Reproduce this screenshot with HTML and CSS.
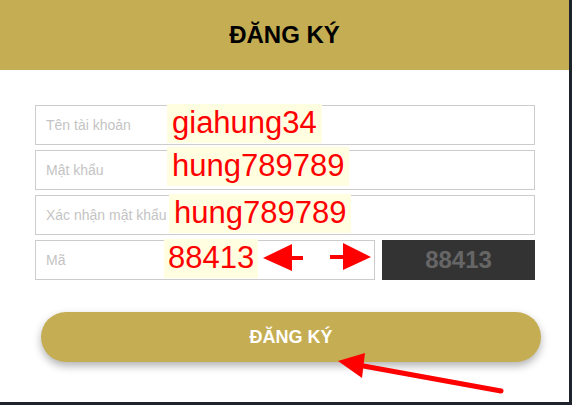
FILE: index.html
```html
<!DOCTYPE html>
<html lang="vi">
<head>
    <meta charset="UTF-8">
    <meta name="viewport" content="width=device-width, initial-scale=1.0">
    <title>Đăng ký</title>
    <link rel="stylesheet" href="styles.css">
</head>
<body>
    <div class="modal">
        <div class="modal-header">
            <h1>ĐĂNG KÝ</h1>
        </div>

        <div class="modal-body">
            <div class="field">
                <input type="text" placeholder="Tên tài khoản">
                <span class="mark mark-1">giahung34</span>
            </div>
            <div class="field">
                <input type="text" placeholder="Mật khẩu">
                <span class="mark mark-2">hung789789</span>
            </div>
            <div class="field">
                <input type="text" placeholder="Xác nhận mật khẩu">
                <span class="mark mark-3">hung789789</span>
            </div>
            <div class="captcha-row">
                <div class="field">
                    <input type="text" placeholder="Mã">
                    <span class="mark mark-4">88413</span>
                </div>
                <div class="captcha">88413</div>
            </div>

            <button class="submit">ĐĂNG KÝ</button>
        </div>

        <!-- annotation arrows -->
        <svg class="arrows" viewBox="0 0 569 402" width="569" height="402">
            <polygon points="263,258 292,244 292,271" fill="#f00"/>
            <rect x="290" y="256" width="13" height="4" fill="#f00"/>
            <rect x="330" y="255" width="15" height="4" fill="#f00"/>
            <polygon points="371,257 343,243 343,270" fill="#f00"/>
            <polygon points="338,361 365,353 362,378" fill="#f00"/>
            <line x1="358" y1="365" x2="501" y2="391" stroke="#f00" stroke-width="5" stroke-linecap="round"/>
        </svg>
    </div>
</body>
</html>
```

FILE: styles.css
```css
/* General Styling */
body {
    margin: 0;
    background: #1e222a;
    font-family: 'Liberation Sans', Arial, sans-serif;
}

.modal {
    position: relative;
    width: 569px;
    height: 402px;
    background: #fff;
}

.modal-header {
    height: 70px;
    background: #c5ad53;
    display: flex;
    align-items: center;
    justify-content: center;
}

.modal-header h1 {
    margin: 0;
    font-size: 24px;
    font-weight: bold;
    color: #000;
}

.modal-body {
    padding: 35px 34px 0 35px;
    display: flex;
    flex-direction: column;
    gap: 5px;
}

.field {
    position: relative;
}

.field input {
    display: block;
    box-sizing: border-box;
    width: 100%;
    height: 40px;
    padding: 0 10px;
    border: 1px solid #ccc;
    font-family: 'Liberation Sans', Arial, sans-serif;
    font-size: 14px;
    outline: none;
}

.field input::placeholder {
    color: #c4c4c4;
}

/* highlighted values typed over the form */
.mark {
    position: absolute;
    top: -1px;
    height: 39px;
    padding: 0 5px;
    background: #fffee0;
    color: #f00;
    font-size: 31px;
    line-height: 38px;
    white-space: nowrap;
}

.mark-1 { left: 132px; }
.mark-2 { left: 132px; top: -3px; }
.mark-3 { left: 134px; }
.mark-4 { left: 129px; padding: 0 4px; }

.captcha-row {
    display: grid;
    grid-template-columns: 340px 1fr;
    gap: 7px;
}

.captcha {
    height: 40px;
    background: #333;
    color: #666;
    font-size: 24px;
    font-weight: bold;
    display: flex;
    align-items: center;
    justify-content: center;
}

.submit {
    margin: 27px 0 0 6px;
    width: 500px;
    height: 50px;
    border: none;
    border-radius: 25px;
    background: #c5ad53;
    color: #fff;
    font-family: 'Liberation Sans', Arial, sans-serif;
    font-size: 18px;
    font-weight: bold;
    box-shadow: 0 4px 8px rgba(0, 0, 0, 0.3);
    cursor: pointer;
}

.arrows {
    position: absolute;
    left: 0;
    top: 0;
    pointer-events: none;
}
```
